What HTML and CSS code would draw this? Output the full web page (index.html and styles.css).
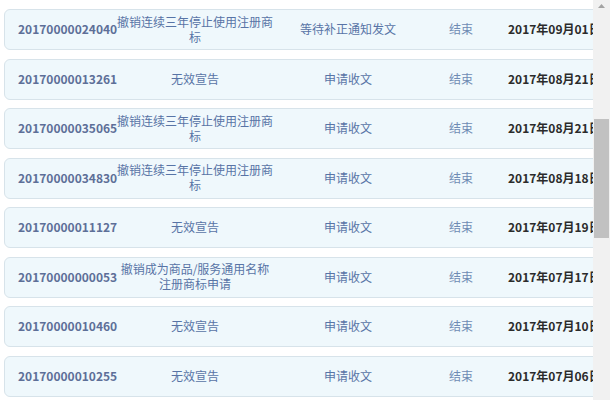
FILE: index.html
```html
<!DOCTYPE html>
<html lang="zh-CN">
<head>
<meta charset="utf-8">
<link rel="stylesheet" href="styles.css">
</head>
<body>
<div class="frame">
  <div class="viewport">
    <div class="list">
      <div class="card"><div class="c-id">20170000024040</div><div class="c-type">撤销连续三年停止使用注册商标</div><div class="c-step">等待补正通知发文</div><div class="c-state">结束</div><div class="c-date">2017年09月01日</div></div>
      <div class="card"><div class="c-id">20170000013261</div><div class="c-type">无效宣告</div><div class="c-step">申请收文</div><div class="c-state">结束</div><div class="c-date">2017年08月21日</div></div>
      <div class="card"><div class="c-id">20170000035065</div><div class="c-type">撤销连续三年停止使用注册商标</div><div class="c-step">申请收文</div><div class="c-state">结束</div><div class="c-date">2017年08月21日</div></div>
      <div class="card"><div class="c-id">20170000034830</div><div class="c-type">撤销连续三年停止使用注册商标</div><div class="c-step">申请收文</div><div class="c-state">结束</div><div class="c-date">2017年08月18日</div></div>
      <div class="card"><div class="c-id">20170000011127</div><div class="c-type">无效宣告</div><div class="c-step">申请收文</div><div class="c-state">结束</div><div class="c-date">2017年07月19日</div></div>
      <div class="card"><div class="c-id">20170000000053</div><div class="c-type">撤销成为商品/服务通用名称注册商标申请</div><div class="c-step">申请收文</div><div class="c-state">结束</div><div class="c-date">2017年07月17日</div></div>
      <div class="card"><div class="c-id">20170000010460</div><div class="c-type">无效宣告</div><div class="c-step">申请收文</div><div class="c-state">结束</div><div class="c-date">2017年07月10日</div></div>
      <div class="card"><div class="c-id">20170000010255</div><div class="c-type">无效宣告</div><div class="c-step">申请收文</div><div class="c-state">结束</div><div class="c-date">2017年07月06日</div></div>
    </div>
  </div>
  <div class="scrollbar">
    <div class="arrow"><svg width="9" height="6" viewBox="0 0 9 6"><path d="M4.5 1 L8 5 L1 5 Z" fill="#a3a3a3"/></svg></div>
    <div class="thumb"></div>
  </div>
</div>
</body>
</html>
```

FILE: styles.css
```css
html, body {
  margin: 0;
  padding: 0;
  background: #ffffff;
}
body {
  font-family: "Noto Sans CJK SC", "Noto Sans", sans-serif;
  font-size: 12px;
}
.frame {
  display: flex;
  width: 616px;
  height: 400px;
  overflow: hidden;
}
.viewport {
  width: 593px;
  height: 400px;
  overflow: hidden;
  flex: none;
}
.list {
  display: flex;
  flex-direction: column;
  gap: 8.5px;
  padding: 9px 0 0 4px;
  width: 640px;
}
.card {
  box-sizing: border-box;
  height: 41px;
  padding-bottom: 2px;
  border: 1px solid #d7e3ea;
  border-radius: 6px;
  background: #eff8fc;
  display: grid;
  grid-template-columns: 111px 158px 148px 78px 1fr;
  align-items: center;
  line-height: 15px;
}
.c-id {
  padding-left: 13px;
  font-weight: bold;
  color: #5d6f98;
  white-space: nowrap;
}
.c-type {
  text-align: center;
  color: #5874a6;
}
.c-step {
  text-align: center;
  color: #5874a6;
  white-space: nowrap;
}
.c-state {
  text-align: center;
  color: #6f8cb4;
}
.c-date {
  padding-left: 8px;
  font-weight: bold;
  color: #2b2b2b;
  white-space: nowrap;
}
.scrollbar {
  width: 17px;
  height: 400px;
  background: #f1f1f1;
  flex: none;
  display: flex;
  flex-direction: column;
  align-items: center;
}
.arrow {
  height: 17px;
  display: flex;
  align-items: center;
  justify-content: center;
  margin-top: -3px;
}
.thumb {
  margin-top: 105px;
  width: 15px;
  height: 119px;
  background: #c1c1c1;
}
```
